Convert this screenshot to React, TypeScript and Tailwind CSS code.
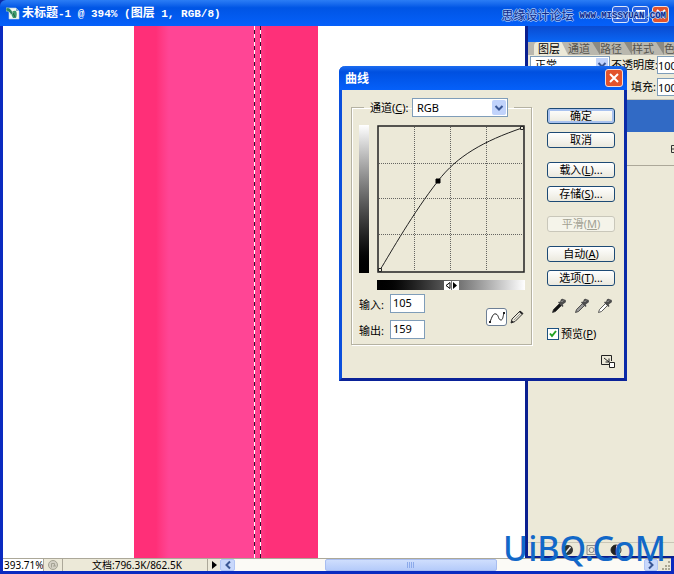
import { ReactNode, useState } from "react";
import clsx from "clsx";

const tabs = ["图层", "通道", "路径", "样式", "色"];

const actionGroups = [
  [{ label: "确定", primary: true }, { label: "取消" }],
  [
    { label: "载入", accel: "L", more: true },
    { label: "存储", accel: "S", more: true },
  ],
  [{ label: "平滑", accel: "M", disabled: true }],
  [
    { label: "自动", accel: "A" },
    { label: "选项", accel: "T", more: true },
  ],
];

const droppers = [
  { name: "黑场", fill: "#111" },
  { name: "灰场", fill: "#999" },
  { name: "白场", fill: "#fff" },
];

function CloseIcon() {
  return (
    <svg viewBox="0 0 16 16" className="size-4 shrink-0" fill="none" stroke="#fff" strokeWidth="2">
      <path d="M4 4l8 8M12 4l-8 8" />
    </svg>
  );
}

function Chevron({ className }: { className?: string }) {
  return (
    <svg viewBox="0 0 10 10" className={clsx("size-2.5", className)} fill="none" stroke="#3a5794" strokeWidth="2">
      <path d="M1.5 3l3.5 3.5L8.500 3" />
    </svg>
  );
}

function DocumentIcon() {
  return (
    <svg viewBox="0 0 14 14" className="size-3.5">
      <path d="M3 2h7l3 3v8H3z" fill="#f4f8f4" stroke="#b5cfe0" strokeWidth=".6" />
      <path d="M10 2l3 3h-3z" fill="#7fa9c8" />
      <path d="M5 8c1-3 3-4 5-3 1 2 1 4 0 7H7z" fill="#3b9b6b" />
      <path d="M0 2c3-1 5 1 7 5L5 9C4 6 2 5 0 5z" fill="#2f8460" stroke="#d6efe0" strokeWidth=".5" />
      <path d="M7 7l2 4" stroke="#235b48" />
    </svg>
  );
}

function Dropper({ fill }: { fill: string }) {
  return (
    <svg viewBox="0 0 16 16" className="size-4">
      <path d="M1.500 14.500l1-3 6-6 2 2-6 6z" fill={fill} stroke="#333" strokeWidth=".8" />
      <path d="M7 4.500l4.500 4.500 1-1-.8-1.500 2.800-2c1.200-1.200.2-3.200-1.500-2.900-.8-1.200-2.400-1-3.100-.1L9 4 8 3.500z" fill="#4d4d4d" />
      <path d="M10.500 4l1.500-1.500" stroke="#ccc" strokeWidth=".8" />
    </svg>
  );
}

function TitleBar() {
  return (
    <header className="flex h-[26px] shrink-0 items-center rounded-tl-md bg-linear-to-b from-[#2b7df5] via-[#0055e5] via-30% to-[#0560fa] pr-[5px] pl-1.5">
      <DocumentIcon />
      <h1 className="ml-0.5 pt-0.5 font-['Liberation_Mono','Noto_Sans_CJK_SC',monospace] text-[11px] leading-4 font-bold whitespace-pre text-white">
        <span className="text-xs">未标题</span>-1 @ 394% (<span className="text-xs">图层</span> 1, RGB/8)
      </h1>
      <div className="ml-auto flex gap-[3px] pt-0.5">
        <button aria-label="最小化" className="flex size-[17px] items-end rounded-[3px] border border-[#dce6fb] bg-[#2a63e0] p-[3px]">
          <span className="h-0.5 w-1.5 bg-white" />
        </button>
        <button aria-label="最大化" className="flex size-[17px] items-center justify-center rounded-[3px] border border-[#dce6fb] bg-[#2a63e0]">
          <span className="size-[9px] border border-t-2 border-white" />
        </button>
        <button aria-label="关闭" className="flex size-[17px] items-center justify-center rounded-[3px] border border-[#f3dcd6] bg-[#e2532c]">
          <CloseIcon />
        </button>
      </div>
    </header>
  );
}

function Canvas() {
  return (
    <main className="flex flex-1 bg-white pl-[131px]">
      <div className="flex w-46 bg-linear-to-r from-[#ff2f78] from-12% via-[#ff4595] via-19% to-[#ff4595]">
        <div className="w-30 shrink-0" />
        <div className="flex w-16 shrink-0 gap-[5px] bg-linear-to-r from-[#ff4595] to-[#fe3079] to-20%">
          <div className="w-px bg-[repeating-linear-gradient(to_bottom,#fff_0_4px,#30102a_4px_8px)]" />
          <div className="w-px bg-[repeating-linear-gradient(to_bottom,#30102a_0_4px,#fff_4px_8px)]" />
        </div>
      </div>
    </main>
  );
}

function StatusBar() {
  return (
    <footer className="flex h-[13px] shrink-0 items-stretch border-t border-[#aca899] bg-[#ece9d8] text-[10px] leading-3">
      <div className="w-10 bg-white pl-px">393.71%</div>
      <div className="flex w-5 items-center justify-center border-x border-[#aca899]">
        <svg viewBox="0 0 12 12" className="size-3" fill="none" stroke="#a5a394">
          <circle cx="6" cy="6" r="4.500" fill="#d4d1c5" />
          <path d="M4.500 8.500V4.500h3v2.500M6 7h3" />
        </svg>
      </div>
      <div className="w-36 pl-[29px]">文档:796.3K/862.5K</div>
      <button aria-label="状态菜单" className="flex w-[13px] items-center justify-center border-l border-[#aca899]">
        <svg viewBox="0 0 5 8" className="h-2 w-[5px]">
          <path d="M0 0l5 4-5 4z" />
        </svg>
      </button>
      <div className="flex flex-1 bg-[#fbfaf6]">
        <button aria-label="向左滚动" className="flex w-[15px] items-center justify-center rounded-xs border border-[#b0c5f5] bg-[#c8d8fb]">
          <Chevron className="rotate-90" />
        </button>
        <div className="flex flex-1">
          <div className="w-[22%]" />
          <div className="flex w-[42%] items-center justify-center gap-px rounded-xs border border-[#a8bdf0] bg-linear-to-b from-[#cfdefd] to-[#b5cbfa]">
            {[0, 1, 2, 3].map((n) => (
              <span key={n} className="h-1.5 w-px bg-[#8caaea]" />
            ))}
          </div>
        </div>
        <button aria-label="向右滚动" className="flex w-3.5 items-center justify-center rounded-xs border border-[#b0c5f5] bg-[#c8d8fb]">
          <Chevron className="-rotate-90" />
        </button>
        <div className="flex w-[13px] items-end justify-end bg-[#ece9d8]">
          <svg viewBox="0 0 12 12" className="size-3" fill="#aaa794">
            <path d="M9 2h2v2H9zM9 6h2v2H9zM9 9h2v2H9zM6 6h2v2H6zM6 9h2v2H6zM3 9h2v2H3z" />
          </svg>
        </div>
      </div>
    </footer>
  );
}

function LayersPanel() {
  return (
    <aside className="absolute top-[26px] right-0 bottom-4 flex w-[149px] flex-col overflow-hidden border-b-2 border-l-3 border-[#0a1f8f] bg-[#ece9d8]">
      <div className="h-4 shrink-0 bg-linear-to-b from-[#0a4bd0] to-[#0a66f5]" />
      <div role="tablist" className="flex h-[13px] shrink-0 bg-[#b9b7ae] pl-1.5">
        {tabs.map((tab, i) => (
          <button
            key={tab}
            role="tab"
            aria-selected={i === 0}
            className={clsx(
              "flex shrink-0 items-center leading-3",
              i === 0 ? "rounded-t-sm bg-[#ece9d8] pl-1" : "text-[#55534c]"
            )}
          >
            {tab}
            <svg
              viewBox="0 0 10 13"
              className={clsx("h-[13px]", i === 0 ? "w-2" : "w-2.5")}
              preserveAspectRatio="none"
            >
              <path d="M0 0h2l8 13V0z" fill={i === 0 ? "#b9b7ae" : "#8c8a82"} />
            </svg>
          </button>
        ))}
      </div>
      <div className="flex h-5 shrink-0 items-center">
        <label htmlFor="blend" className="sr-only">混合模式</label>
        <div className="relative ml-0.5 w-20 shrink-0">
          <select id="blend" className="h-[18px] w-full appearance-none border border-[#7f9db9] bg-white pl-1 leading-4">
            <option>正常</option>
          </select>
          <span className="pointer-events-none absolute top-0.5 right-0.5 flex h-3.5 w-3 items-center justify-center bg-[#c1d3fb]">
            <Chevron />
          </span>
        </div>
        <label htmlFor="opacity" className="ml-px w-[46px] shrink-0 whitespace-nowrap">不透明度:</label>
        <input id="opacity" defaultValue="100%" className="h-[18px] w-10 shrink-0 border border-[#7f9db9] bg-white" />
      </div>
      <div className="flex h-[25px] shrink-0 items-center border-b border-[#c9c6b6] pl-[103px]">
        <label htmlFor="fill" className="w-[26px] shrink-0 whitespace-nowrap">填充:</label>
        <input id="fill" defaultValue="100%" className="h-[18px] w-10 shrink-0 border border-[#7f9db9] bg-white" />
      </div>
      <div className="h-8 shrink-0 bg-[#316ac5]" />
      <div className="flex h-[34px] shrink-0 items-center justify-end border-b border-[#aca899]">
        <svg viewBox="0 0 3 8" className="h-2 w-[3px]" fill="none" stroke="#333">
          <path d="M3 .5H.500v7H3M.5 4H3" />
        </svg>
      </div>
      <div className="flex-1" />
      <div className="flex h-3.5 shrink-0 items-center gap-3 border-t border-[#c9c6b6] pl-[34px]">
        <svg viewBox="0 0 12 12" className="size-3">
          <circle cx="6" cy="6" r="5" fill="#333" />
          <path d="M3.500 9l5-6" stroke="#eee" strokeWidth="1.500" />
        </svg>
        <svg viewBox="0 0 12 12" className="size-3" fill="none" stroke="#888">
          <path d="M1 1.500h9v9H1z" />
          <circle cx="5.500" cy="6" r="2.500" />
        </svg>
        <svg viewBox="0 0 12 12" className="size-3">
          <circle cx="6" cy="6" r="5" fill="#ddd" stroke="#333" />
          <path d="M6 1a5 5 0 000 10z" fill="#222" />
        </svg>
      </div>
    </aside>
  );
}

function CurveGraph() {
  return (
    <svg viewBox="0 0 148 148" className="size-37 shrink-0" fill="none">
      <path d="M1 147V1h146v146z" stroke="#222" strokeWidth="1.500" />
      <path
        d="M37.500 2v144M73.500 2v144M109.500 2v144M2 38.500h144M2 73.500h144M2 109.500h144"
        stroke="#444"
        strokeDasharray="1 1"
        shapeRendering="crispEdges"
        opacity=".8"
      />
      <path d="M3 145C14 127 36 88 61 56C80 31 107 16 145 3" stroke="#222" />
      <path d="M59 54h4v4h-4z" fill="#000" stroke="#000" />
      <path d="M1.500 143.500h3v3h-3zM143.500 1.500h3v3h-3z" fill="#ece9d8" stroke="#222" />
    </svg>
  );
}

function Field({ id, label, value }: { id: string; label: string; value: string }) {
  return (
    <div className="flex items-center">
      <label htmlFor={id} className="w-[31px] pt-0.5">{label}:</label>
      <input id={id} defaultValue={value} className="h-[19px] w-[35px] border border-[#7f9db9] bg-white px-0.5 pb-0.5" />
    </div>
  );
}

function ActionButton({
  children,
  primary,
  disabled,
}: {
  children: ReactNode;
  primary?: boolean;
  disabled?: boolean;
}) {
  return (
    <button
      disabled={disabled}
      className={clsx(
        "flex h-4 w-full items-center justify-center rounded-[3px] border leading-3",
        disabled
          ? "border-[#c9c7ba] bg-[#f5f4ea] text-[#a1a192]"
          : "border-[#1d4a75] bg-linear-to-b from-white to-[#ebe9de]",
        primary && "inset-ring-2 inset-ring-[#a9c2ef]"
      )}
    >
      {children}
    </button>
  );
}

function CurvesDialog() {
  const [preview, setPreview] = useState(true);

  return (
    <section
      role="dialog"
      aria-labelledby="curves-title"
      className="absolute top-[66px] left-[339px] w-72 rounded-t-md border-3 border-t-0 border-[#0b4fdc] border-r-[#0a2aa8] border-b-[#0a2298] bg-[#ece9d8]"
    >
      <div className="-mx-[3px] flex h-6 items-center justify-between rounded-t-md bg-linear-to-b from-[#1c6cf0] via-[#0050e0] via-25% to-[#0560fa] pr-1 pl-1.5">
        <h2 id="curves-title" className="pt-0.5 text-xs font-bold text-white">曲线</h2>
        <button aria-label="关闭" className="flex size-[18px] items-center justify-center rounded-[3px] border border-[#f3dcd6] bg-[#e2532c]">
          <CloseIcon />
        </button>
      </div>
      <div className="flex gap-[15px] pt-2 pr-[9px] pb-2.5 pl-[9px]">
        <fieldset className="h-[247px] w-45 shrink-0 border border-[#b5b2a2] pr-1.5 pl-[7px] shadow-[inset_1px_1px_0_#fff,1px_1px_0_#fff]">
          <legend className="ml-[5px] flex items-center px-1.5">
            <label htmlFor="channel" className="w-[42px]">通道(<u>C</u>):</label>
            <span className="relative w-24">
              <select id="channel" className="h-[19px] w-full appearance-none border border-[#7f9db9] bg-white pl-1">
                <option>RGB</option>
              </select>
              <span className="pointer-events-none absolute top-0.5 right-0.5 flex h-[15px] w-3.5 items-center justify-center rounded-xs bg-[#c1d3fb]">
                <Chevron />
              </span>
            </span>
          </legend>
          <div className="mt-2 flex gap-2">
            <div className="w-2.5 bg-linear-to-b from-white to-black" />
            <CurveGraph />
          </div>
          <div className="mt-[7px] ml-[18px] flex h-2.5 items-center justify-center bg-linear-to-r from-black to-white">
            <svg viewBox="0 0 15 9" className="h-[9px] w-[15px]">
              <path d="M0 0h15v9H0z" fill="#fff" />
              <path d="M6 1.500v6l-4-3z" fill="#fff" stroke="#000" />
              <path d="M9 1l4 3.500L9 8z" />
              <path d="M7.500 0v9" stroke="#777" />
            </svg>
          </div>
          <div className="mt-1 flex items-center justify-between">
            <div className="flex flex-col gap-[7px]">
              <Field id="in" label="输入" value="105" />
              <Field id="out" label="输出" value="159" />
            </div>
            <div className="flex items-center gap-0.5">
              <button aria-label="曲线工具" className="flex h-[18px] w-[21px] items-center justify-center rounded-[3px] border border-[#6d7f95] bg-white">
                <svg viewBox="0 0 18 14" className="h-3.5 w-[18px]" fill="none" stroke="#222">
                  <path d="M2 12C4 7 5 3 8 4c3 1 2 6 5 6 2 0 2-4 3-7" />
                  <path d="M1 11h2v2H1zM15 2h2v2h-2z" fill="#222" stroke="none" />
                </svg>
              </button>
              <button aria-label="铅笔工具" className="size-4">
                <svg viewBox="0 0 16 16" className="size-4">
                  <path d="M2 14l1-4 8-8 3 2.500-8 8z" fill="#e8e5d5" stroke="#333" />
                  <path d="M2 14l.7-2.500L5 13zM10 3l3 2.500 1-1L11.500 2z" fill="#222" />
                  <path d="M5 11l7-7" stroke="#999" />
                </svg>
              </button>
            </div>
          </div>
        </fieldset>
        <div className="flex flex-1 flex-col pt-2.5">
          <div className="flex flex-col gap-3.5">
            {actionGroups.map((group, i) => (
              <div key={i} className="flex flex-col gap-2">
                {group.map((action) => (
                  <ActionButton key={action.label} primary={action.primary} disabled={action.disabled}>
                    {action.label}
                    {action.accel && (
                      <>
                        (<u>{action.accel}</u>){action.more && "..."}
                      </>
                    )}
                  </ActionButton>
                ))}
              </div>
            ))}
          </div>
          <div className="mt-3 flex gap-[7px] pl-1">
            {droppers.map((d) => (
              <button key={d.name} aria-label={d.name}>
                <Dropper fill={d.fill} />
              </button>
            ))}
          </div>
          <label className="relative mt-3 flex h-4 items-center gap-0.5 whitespace-nowrap">
            <input
              type="checkbox"
              checked={preview}
              onChange={(e) => setPreview(e.target.checked)}
              className="size-3 appearance-none border border-[#1c5180] bg-white"
            />
            {preview && (
              <svg viewBox="0 0 12 12" className="pointer-events-none absolute left-0 size-3" fill="none" stroke="#21a121" strokeWidth="2">
                <path d="M3 5.500l2 2.500 4-5" />
              </svg>
            )}
            <span>预览(<u>P</u>)</span>
          </label>
          <button aria-label="展开" className="mt-3 self-end">
            <svg viewBox="0 0 14 14" className="size-3.5" fill="none" stroke="#222">
              <path d="M8 10.500H.500v-9h10V7" />
              <path d="M3 4l5 4M8 4.500V8H4.500" />
              <path d="M8.500 8.500h5v5h-5z" fill="#fff" />
            </svg>
          </button>
        </div>
      </div>
    </section>
  );
}

export default function App() {
  return (
    <div className="relative flex h-screen flex-col overflow-hidden bg-[#0a2aa8] font-['Noto_Sans','Noto_Sans_CJK_SC',sans-serif] text-[11px] leading-4 text-black">
      <TitleBar />
      <div className="flex flex-1 flex-col border-x-3 border-b-3 border-[#0a2ac0]">
        <Canvas />
        <StatusBar />
      </div>
      <LayersPanel />
      <CurvesDialog />
      <p className="absolute top-2 right-2 flex items-center gap-1.5 text-xs leading-4 text-[#0b2a8c] [text-shadow:1px_0_0_#9fc0f5,-1px_0_0_#9fc0f5,0_1px_0_#9fc0f5,0_-1px_0_#9fc0f5]">
        思缘设计论坛
        <span className="font-['Liberation_Mono',monospace] text-[9px] font-bold">WWW.MISSYUAN.COM</span>
      </p>
      <p className="absolute right-2 bottom-0.5 text-[34px] leading-12 font-medium text-[#1268c8]">UiBQ.CoM</p>
    </div>
  );
}
